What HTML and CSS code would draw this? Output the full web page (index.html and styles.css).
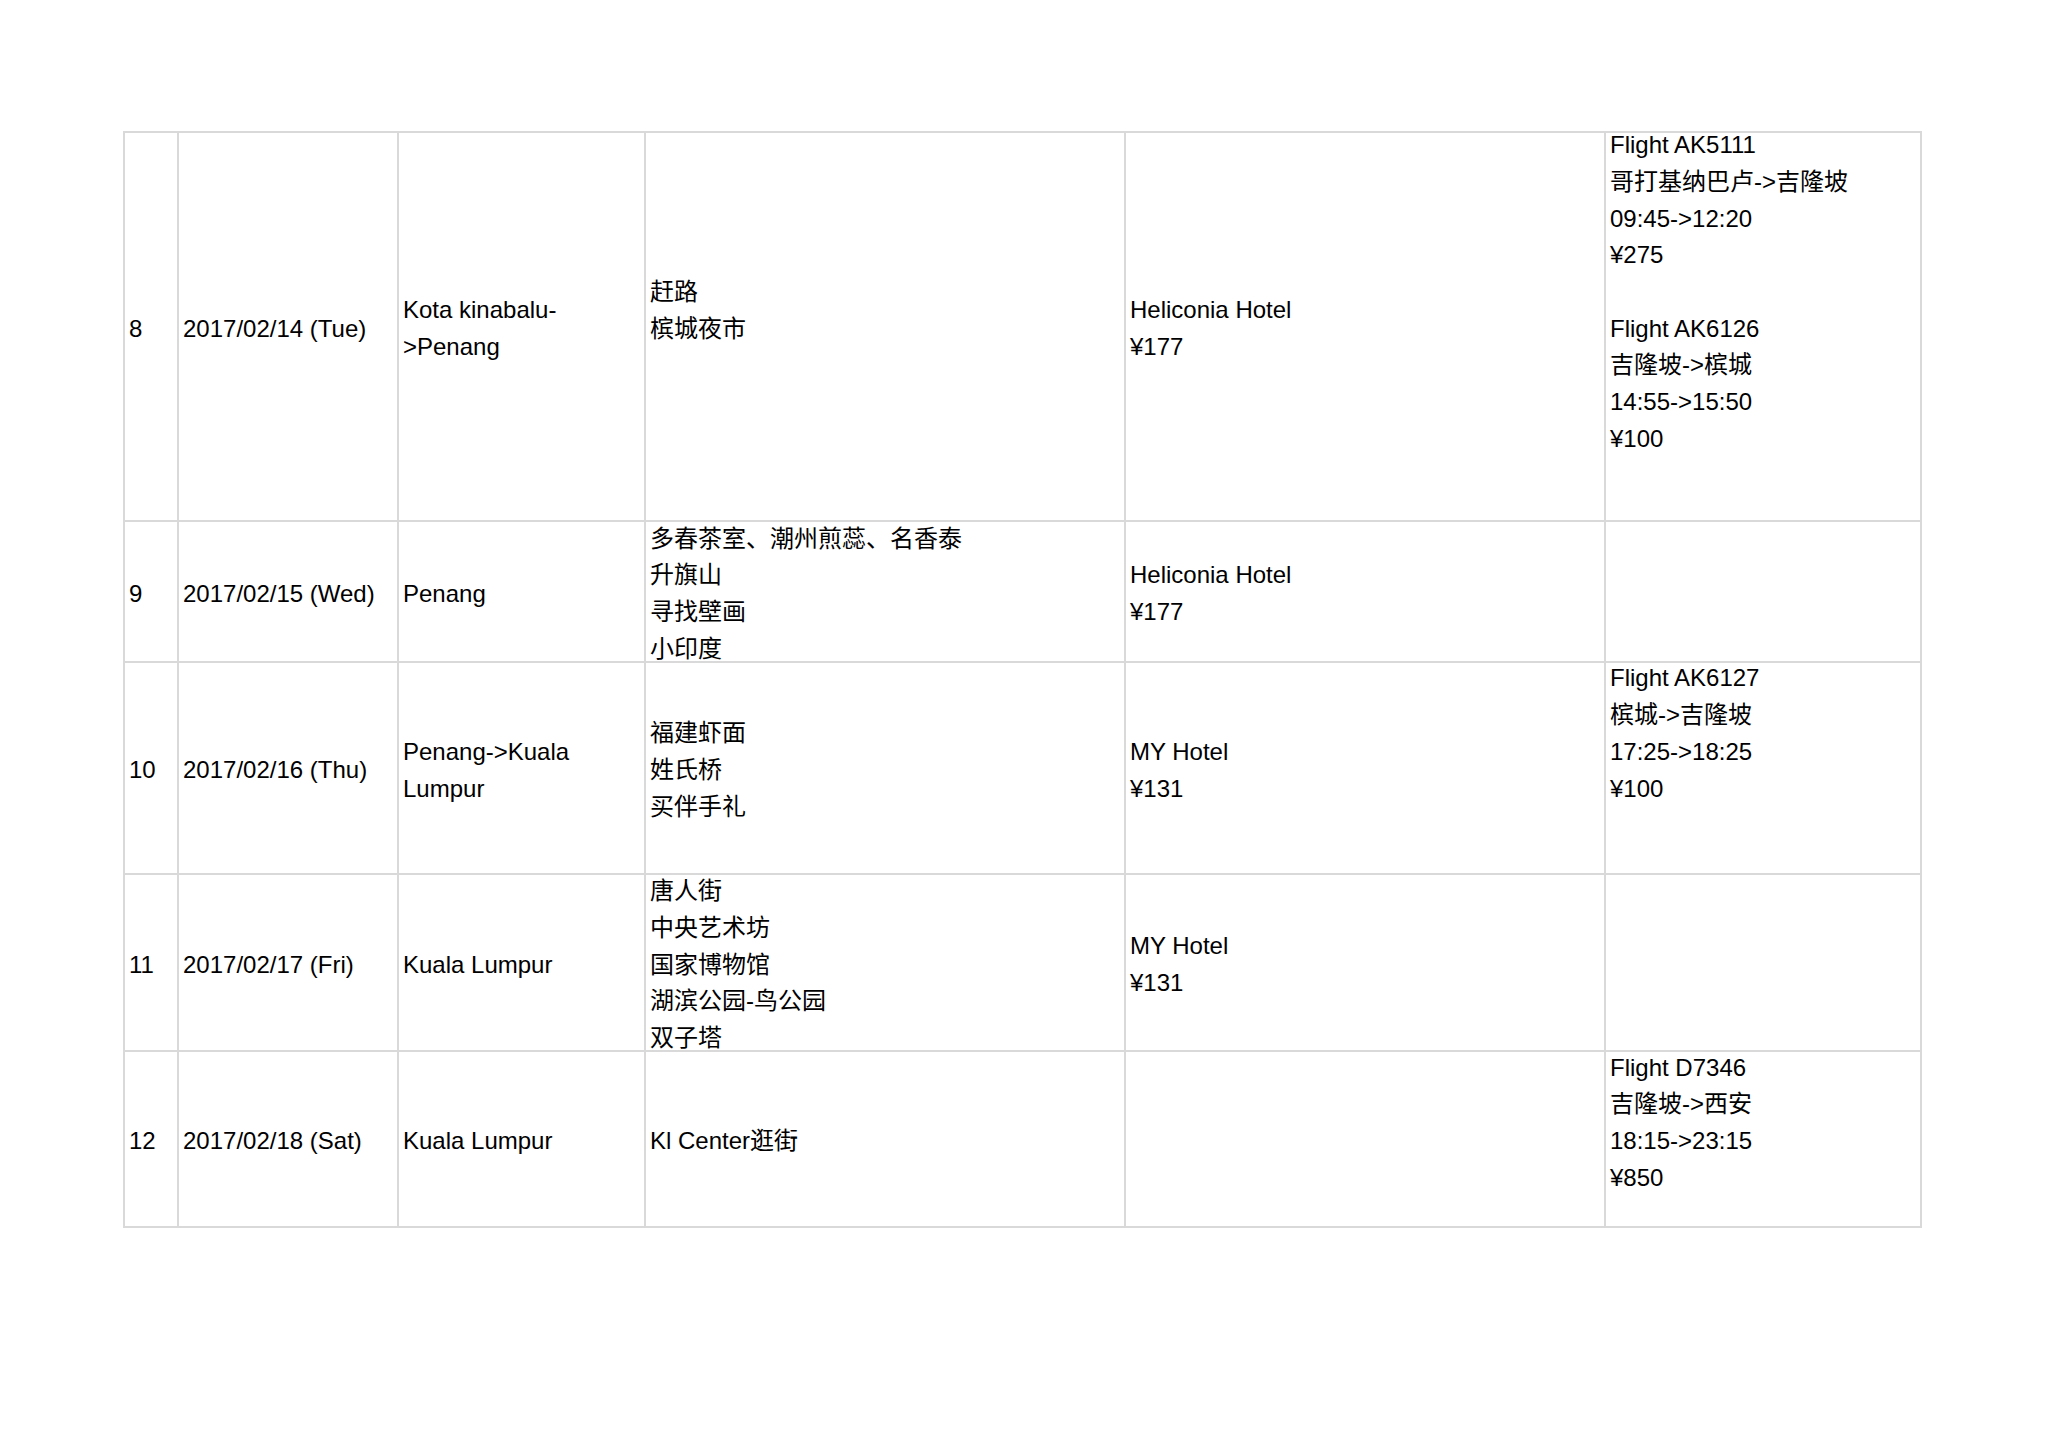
FILE: index.html
```html
<!DOCTYPE html>
<html lang="zh">
<head>
<meta charset="utf-8">
<title>Itinerary</title>
<link rel="stylesheet" href="styles.css">
</head>
<body>
<div class="page">
  <div class="table">
    <!-- Row 8 -->
    <div class="cell"><div class="ln">8</div></div>
    <div class="cell"><div class="ln">2017/02/14 (Tue)</div></div>
    <div class="cell"><div class="ln">Kota kinabalu-</div><div class="ln">&gt;Penang</div></div>
    <div class="cell"><div class="ln">赶路</div><div class="ln">槟城夜市</div><div class="ln blank"></div></div>
    <div class="cell"><div class="ln">Heliconia Hotel</div><div class="ln">¥177</div></div>
    <div class="cell">
      <div class="ln">Flight AK5111</div>
      <div class="ln">哥打基纳巴卢-&gt;吉隆坡</div>
      <div class="ln">09:45-&gt;12:20</div>
      <div class="ln">¥275</div>
      <div class="ln blank"></div>
      <div class="ln">Flight AK6126</div>
      <div class="ln">吉隆坡-&gt;槟城</div>
      <div class="ln">14:55-&gt;15:50</div>
      <div class="ln">¥100</div>
      <div class="ln blank"></div>
      <div class="ln blank"></div>
    </div>

    <!-- Row 9 -->
    <div class="cell"><div class="ln">9</div></div>
    <div class="cell"><div class="ln">2017/02/15 (Wed)</div></div>
    <div class="cell"><div class="ln">Penang</div></div>
    <div class="cell">
      <div class="ln">多春茶室、潮州煎蕊、名香泰</div>
      <div class="ln">升旗山</div>
      <div class="ln">寻找壁画</div>
      <div class="ln">小印度</div>
    </div>
    <div class="cell"><div class="ln">Heliconia Hotel</div><div class="ln">¥177</div></div>
    <div class="cell"></div>

    <!-- Row 10 -->
    <div class="cell"><div class="ln">10</div></div>
    <div class="cell"><div class="ln">2017/02/16 (Thu)</div></div>
    <div class="cell"><div class="ln">Penang-&gt;Kuala</div><div class="ln">Lumpur</div></div>
    <div class="cell">
      <div class="ln">福建虾面</div>
      <div class="ln">姓氏桥</div>
      <div class="ln">买伴手礼</div>
    </div>
    <div class="cell"><div class="ln">MY Hotel</div><div class="ln">¥131</div></div>
    <div class="cell">
      <div class="ln">Flight AK6127</div>
      <div class="ln">槟城-&gt;吉隆坡</div>
      <div class="ln">17:25-&gt;18:25</div>
      <div class="ln">¥100</div>
      <div class="ln blank"></div>
      <div class="ln blank"></div>
    </div>

    <!-- Row 11 -->
    <div class="cell"><div class="ln">11</div></div>
    <div class="cell"><div class="ln">2017/02/17 (Fri)</div></div>
    <div class="cell"><div class="ln">Kuala Lumpur</div></div>
    <div class="cell">
      <div class="ln">唐人街</div>
      <div class="ln">中央艺术坊</div>
      <div class="ln">国家博物馆</div>
      <div class="ln">湖滨公园-鸟公园</div>
      <div class="ln">双子塔</div>
    </div>
    <div class="cell"><div class="ln">MY Hotel</div><div class="ln">¥131</div></div>
    <div class="cell"></div>

    <!-- Row 12 -->
    <div class="cell"><div class="ln">12</div></div>
    <div class="cell"><div class="ln">2017/02/18 (Sat)</div></div>
    <div class="cell"><div class="ln">Kuala Lumpur</div></div>
    <div class="cell"><div class="ln">Kl Center逛街</div></div>
    <div class="cell"></div>
    <div class="cell">
      <div class="ln">Flight D7346</div>
      <div class="ln">吉隆坡-&gt;西安</div>
      <div class="ln">18:15-&gt;23:15</div>
      <div class="ln">¥850</div>
      <div class="ln blank"></div>
    </div>
  </div>
</div>
</body>
</html>
```

FILE: styles.css
```css
html, body {
  margin: 0;
  padding: 0;
  background: #ffffff;
}

body {
  font-family: "Liberation Sans", Arial, "Noto Sans CJK SC", sans-serif;
  font-size: 24px;
  color: #000000;
}

.page {
  padding: 131px 0 0 123px;
}

.table {
  display: grid;
  grid-template-columns: 54px 220px 247px 480px 480px 316px;
  grid-template-rows: 389px 141px 212px 177px 176px;
  width: max-content;
  border-left: 2px solid #d9d9d9;
  border-top: 2px solid #d9d9d9;
}

.cell {
  display: flex;
  flex-direction: column;
  justify-content: center;
  border-right: 2px solid #d9d9d9;
  border-bottom: 2px solid #d9d9d9;
  padding-top: 5px;
  padding-left: 4px;
  min-height: 0;
  min-width: 0;
  overflow: visible;
}

.ln {
  flex: none;
  height: 36.7px;
  line-height: 36.7px;
  white-space: nowrap;
}
```
